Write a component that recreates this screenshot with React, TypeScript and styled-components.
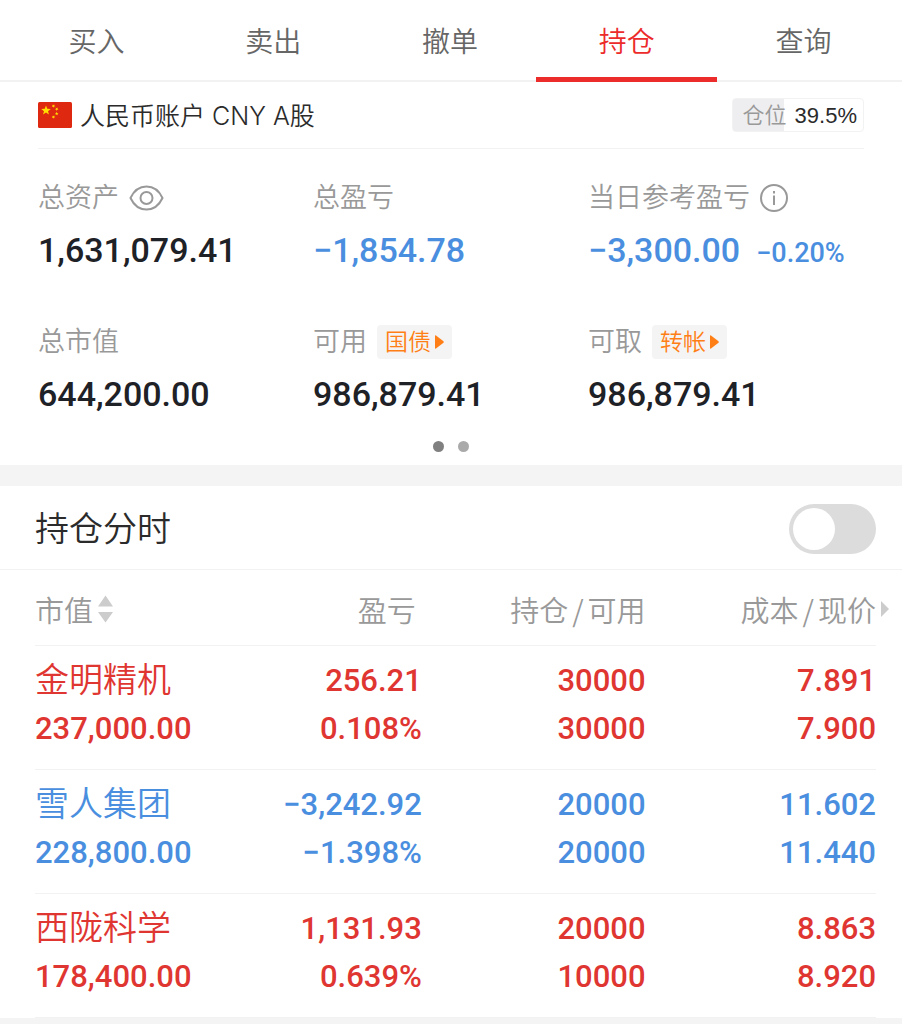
import React, { useState } from "react";
import styled, { createGlobalStyle } from "styled-components";

const color = {
  red: "#df3632",
  accent: "#ec2b2b",
  blue: "#4a8ee0",
  ink: "#1e2126",
  text: "#2b2b2b",
  muted: "#999999",
  line: "#f2f2f2",
  band: "#f4f4f4",
  orange: "#ff7f16",
};

const cjk = '"Noto Sans CJK SC", sans-serif';
const digits = `Roboto, ${cjk}`;

const GlobalStyle = createGlobalStyle`
  * { box-sizing: border-box; }
  body {
    margin: 0;
    background: ${color.band};
    font-family: "Liberation Sans", ${cjk};
    font-weight: 350;
    color: ${color.text};
  }
  button {
    margin: 0;
    padding: 0;
    border: 0;
    background: none;
    font: inherit;
    color: inherit;
    cursor: pointer;
  }
  svg { display: block; }
`;

const Page = styled.main`
  background: #ffffff;
`;

const TabBar = styled.nav`
  display: flex;
  height: 82px;
  padding: 0 10px 0 8px;
  border-bottom: 2px solid ${color.line};
`;

const Tab = styled.button<{ $active: boolean }>`
  position: relative;
  flex: 1;
  font-family: ${cjk};
  font-size: 28px;
  line-height: 40px;
  color: ${(p) => (p.$active ? color.accent : "#666666")};

  &::after {
    content: "";
    display: ${(p) => (p.$active ? "block" : "none")};
    position: absolute;
    left: -2px;
    right: -2px;
    bottom: -2px;
    height: 5px;
    background: ${color.accent};
  }
`;

const Summary = styled.section`
  padding: 0 38px;
`;

const AccountRow = styled.header`
  display: flex;
  align-items: center;
  gap: 8px;
  height: 67px;
  border-bottom: 1px solid ${color.line};
`;

const AccountName = styled.h1`
  flex: 1;
  margin: 0;
  padding-top: 2px;
  font-family: Inter, ${cjk};
  font-size: 25px;
  line-height: 36px;
  font-weight: 350;
`;

const Exposure = styled.div`
  display: flex;
  align-items: center;
  gap: 8px;
  height: 34px;
  padding: 2px 6px 0 10px;
  border: 1px solid ${color.line};
  border-radius: 4px;
  background: linear-gradient(to right, #eeeef0 39.5%, #ffffff 39.5%);
  font-size: 22px;
  line-height: 32px;
`;

const ExposureLabel = styled.span`
  color: ${color.muted};
`;

const StatGrid = styled.dl`
  display: grid;
  grid-template-columns: repeat(3, 1fr);
  row-gap: 54px;
  margin: 0;
  padding: 31px 1px 0 0;
`;

const Stat = styled.div`
  display: flex;
  flex-direction: column;
  gap: 14px;
`;

const StatLabel = styled.dt`
  display: flex;
  align-items: center;
  gap: 10px;
  height: 36px;
  font-size: 27px;
  line-height: 38px;
  color: ${color.muted};
`;

const StatValue = styled.dd<{ $tone?: string }>`
  display: flex;
  align-items: baseline;
  gap: 16px;
  margin: 0;
  font-family: ${digits};
  font-size: 34px;
  line-height: 40px;
  font-weight: 500;
  white-space: nowrap;
  color: ${(p) => p.$tone ?? color.ink};
`;

const StatPercent = styled.span`
  font-size: 27px;
  line-height: 28px;
`;

const TagButton = styled.button`
  display: flex;
  align-items: center;
  gap: 4px;
  height: 34px;
  padding: 0 8px;
  border-radius: 4px;
  background: ${color.band};
  font-size: 23px;
  line-height: 34px;
  color: ${color.orange};
`;

const Dots = styled.div`
  display: flex;
  justify-content: center;
  gap: 14px;
  padding: 27px 0 13px;
`;

const Dot = styled.span<{ $active?: boolean }>`
  width: 11px;
  height: 11px;
  border-radius: 50%;
  background: ${(p) => (p.$active ? "#808080" : "#aaaaaa")};
`;

const Holdings = styled.section`
  border-top: 21px solid ${color.band};
`;

const ToggleRow = styled.label`
  display: flex;
  align-items: center;
  justify-content: space-between;
  height: 84px;
  padding: 2px 26px 0 35px;
  border-bottom: 1px solid ${color.line};
  font-size: 34px;
  line-height: 48px;
`;

const Switch = styled.input`
  appearance: none;
  position: relative;
  width: 87px;
  height: 50px;
  margin: 0;
  border-radius: 25px;
  background: ${(p) => (p.checked ? color.accent : "#dcdcdc")};
  cursor: pointer;

  &::before {
    content: "";
    position: absolute;
    top: 4px;
    left: ${(p) => (p.checked ? "41px" : "4px")};
    width: 42px;
    height: 42px;
    border-radius: 50%;
    background: #ffffff;
  }
`;

const TableWrap = styled.div`
  padding: 0 26px 0 35px;
`;

const Table = styled.table`
  width: 100%;
  table-layout: fixed;
  border-collapse: collapse;
`;

const HeadCell = styled.th<{ $width: string; $first?: boolean; $inset?: boolean }>`
  width: ${(p) => p.$width};
  height: 75px;
  padding: 4px ${(p) => (p.$inset ? "6px" : "0")} 0 0;
  border-bottom: 1px solid ${color.line};
  text-align: ${(p) => (p.$first ? "left" : "right")};
  font-family: ${cjk};
  font-size: 29px;
  line-height: 40px;
  font-weight: 350;
  white-space: nowrap;
  color: ${color.muted};
`;

const SortButton = styled.button`
  display: flex;
  align-items: center;
  gap: 5px;
`;

const MoreButton = styled.button`
  display: inline-flex;
  align-items: center;
  gap: 5px;
  margin-right: -13px;
  vertical-align: top;
`;

const Slash = styled.span`
  margin: 0 4px;
`;

const Cell = styled.td<{ $tone: string; $first?: boolean }>`
  padding: 11px 0 16px;
  border-bottom: 1px solid ${color.line};
  text-align: ${(p) => (p.$first ? "left" : "right")};
  font-family: ${digits};
  font-size: 31px;
  font-weight: 500;
  white-space: nowrap;
  color: ${(p) => p.$tone};
`;

const Line = styled.div`
  height: 48px;
  line-height: 48px;
`;

const StockName = styled(Line)`
  font-family: ${cjk};
  font-size: 34px;
  line-height: 42px;
  font-weight: 350;
`;

const STAR = "0,-1 0.25,-0.34 0.951,-0.309 0.4,0.13 0.588,0.809 0,0.42 -0.588,0.809 -0.4,0.13 -0.951,-0.309 -0.25,-0.34";

const Flag = () => (
  <svg width="34" height="26" viewBox="0 0 34 26" role="img" aria-label="中国">
    <rect width="34" height="26" rx="1.5" fill="#de2910" />
    <g fill="#ffde00">
      <polygon points={STAR} transform="translate(8 8.5) scale(5)" />
      <polygon points={STAR} transform="translate(15.5 4) rotate(20) scale(1.9)" />
      <polygon points={STAR} transform="translate(18.7 7) rotate(40) scale(1.9)" />
      <polygon points={STAR} transform="translate(18.7 11.6) scale(1.9)" />
      <polygon points={STAR} transform="translate(15.5 15) rotate(20) scale(1.9)" />
    </g>
  </svg>
);

const EyeIcon = () => (
  <svg width="35" height="26" viewBox="0 0 35 26" fill="none" stroke="#999" strokeWidth="2" aria-hidden="true">
    <path d="M1.5 13C5 5.5 10.500 1.500 17.500 1.500S30 5.500 33.500 13C30 20.500 24.500 24.500 17.500 24.500S5 20.500 1.500 13Z" />
    <circle cx="17.500" cy="13" r="6" />
  </svg>
);

const InfoIcon = () => (
  <svg width="28" height="28" viewBox="0 0 28 28" fill="none" stroke="#999" strokeWidth="2" aria-hidden="true">
    <circle cx="14" cy="14" r="13" />
    <path d="M14 11.500V21M14 7V9.500" />
  </svg>
);

const TagArrow = () => (
  <svg width="9" height="14" viewBox="0 0 9 14" fill="currentColor" aria-hidden="true">
    <path d="M0 1Q0 0 1 0.500L8.500 6.200Q9 7 8.500 7.800L1 13.500Q0 14 0 13Z" />
  </svg>
);

const SortIcon = () => (
  <svg width="15" height="28" viewBox="0 0 15 28" fill="#cccccc" aria-hidden="true">
    <path d="M7.500 0.500L15 11.500H0ZM7.500 27.500L0 17H15Z" />
  </svg>
);

const MoreIcon = () => (
  <svg width="8" height="16" viewBox="0 0 8 16" fill="#cccccc" aria-hidden="true">
    <path d="M0 0L8 8L0 16Z" />
  </svg>
);

const tabs = ["买入", "卖出", "撤单", "持仓", "查询"];

const rows = [
  { name: "金明精机", value: "237,000.00", gain: "256.21", rate: "0.108%", held: "30000", usable: "30000", cost: "7.891", price: "7.900", tone: color.red },
  { name: "雪人集团", value: "228,800.00", gain: "−3,242.92", rate: "−1.398%", held: "20000", usable: "20000", cost: "11.602", price: "11.440", tone: color.blue },
  { name: "西陇科学", value: "178,400.00", gain: "1,131.93", rate: "0.639%", held: "20000", usable: "10000", cost: "8.863", price: "8.920", tone: color.red },
];

export default function App() {
  const [active, setActive] = useState("持仓");
  const [chart, setChart] = useState(false);

  return (
    <Page>
      <GlobalStyle />
      <TabBar>
        {tabs.map((t) => (
          <Tab key={t} type="button" $active={t === active} onClick={() => setActive(t)}>
            {t}
          </Tab>
        ))}
      </TabBar>

      <Summary>
        <AccountRow>
          <Flag />
          <AccountName>人民币账户 CNY A股</AccountName>
          <Exposure>
            <ExposureLabel>仓位</ExposureLabel>
            <span>39.5%</span>
          </Exposure>
        </AccountRow>

        <StatGrid>
          <Stat>
            <StatLabel>
              总资产
              <button type="button" aria-label="隐藏金额"><EyeIcon /></button>
            </StatLabel>
            <StatValue>1,631,079.41</StatValue>
          </Stat>
          <Stat>
            <StatLabel>总盈亏</StatLabel>
            <StatValue $tone={color.blue}>−1,854.78</StatValue>
          </Stat>
          <Stat>
            <StatLabel>
              当日参考盈亏
              <button type="button" aria-label="说明"><InfoIcon /></button>
            </StatLabel>
            <StatValue $tone={color.blue}>
              −3,300.00
              <StatPercent>−0.20%</StatPercent>
            </StatValue>
          </Stat>
          <Stat>
            <StatLabel>总市值</StatLabel>
            <StatValue>644,200.00</StatValue>
          </Stat>
          <Stat>
            <StatLabel>
              可用
              <TagButton type="button">国债<TagArrow /></TagButton>
            </StatLabel>
            <StatValue>986,879.41</StatValue>
          </Stat>
          <Stat>
            <StatLabel>
              可取
              <TagButton type="button">转帐<TagArrow /></TagButton>
            </StatLabel>
            <StatValue>986,879.41</StatValue>
          </Stat>
        </StatGrid>

        <Dots>
          <Dot $active />
          <Dot />
        </Dots>
      </Summary>

      <Holdings>
        <ToggleRow>
          持仓分时
          <Switch type="checkbox" role="switch" checked={chart} onChange={(e) => setChart(e.target.checked)} />
        </ToggleRow>
        <TableWrap>
          <Table>
            <thead>
              <tr>
                <HeadCell $width="23%" $first>
                  <SortButton type="button">市值<SortIcon /></SortButton>
                </HeadCell>
                <HeadCell $width="23%" $inset>盈亏</HeadCell>
                <HeadCell $width="26.6%">持仓<Slash>/</Slash>可用</HeadCell>
                <HeadCell $width="27.4%">
                  <MoreButton type="button">
                    <span>成本<Slash>/</Slash>现价</span>
                    <MoreIcon />
                  </MoreButton>
                </HeadCell>
              </tr>
            </thead>
            <tbody>
              {rows.map((r) => (
                <tr key={r.name}>
                  <Cell $tone={r.tone} $first>
                    <StockName>{r.name}</StockName>
                    <Line>{r.value}</Line>
                  </Cell>
                  <Cell $tone={r.tone}>
                    <Line>{r.gain}</Line>
                    <Line>{r.rate}</Line>
                  </Cell>
                  <Cell $tone={r.tone}>
                    <Line>{r.held}</Line>
                    <Line>{r.usable}</Line>
                  </Cell>
                  <Cell $tone={r.tone}>
                    <Line>{r.cost}</Line>
                    <Line>{r.price}</Line>
                  </Cell>
                </tr>
              ))}
            </tbody>
          </Table>
        </TableWrap>
      </Holdings>
    </Page>
  );
}
